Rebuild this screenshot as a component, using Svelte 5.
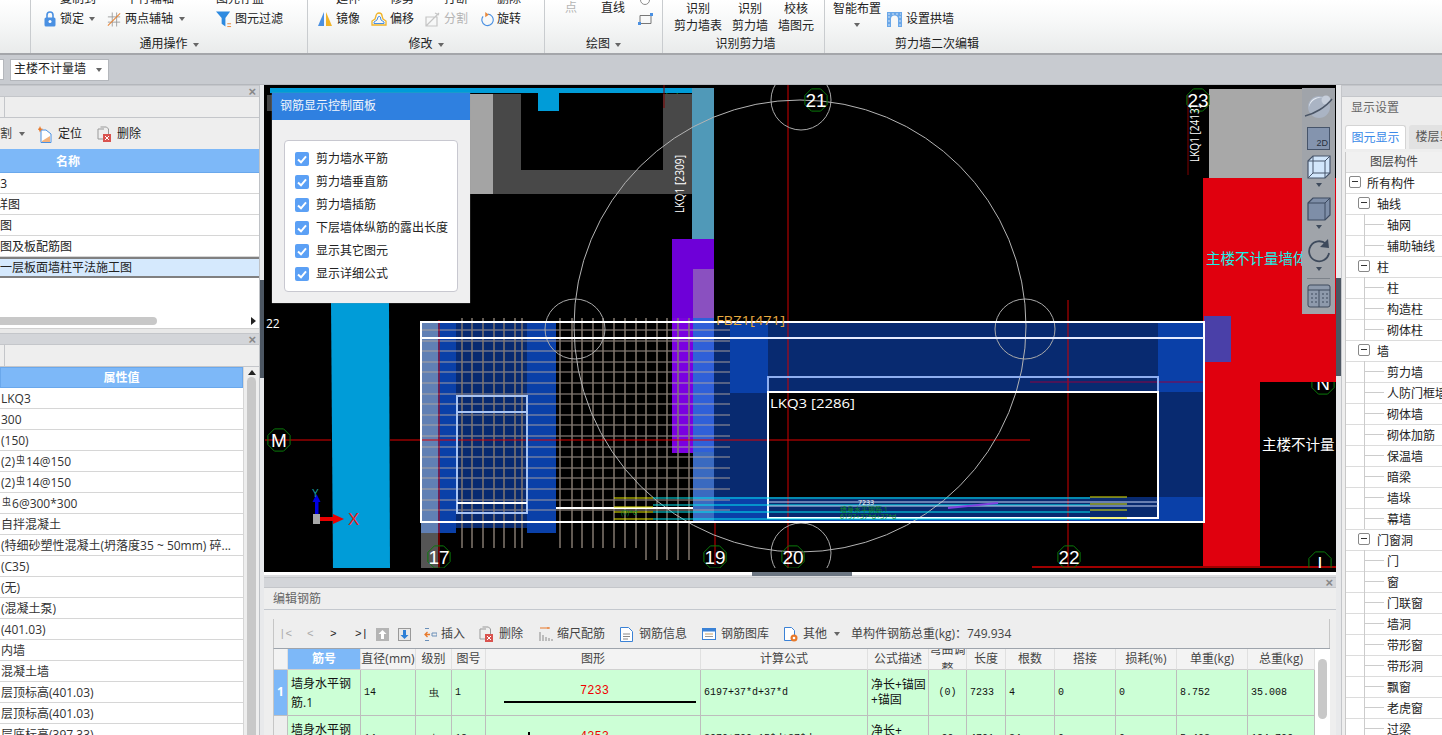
<script>
  const names = [
    { t: 'x3', o: -6 }, { t: '详图', o: -4 }, { t: '图', o: 0 },
    { t: '图及板配筋图', o: 0 }, { t: '一层板面墙柱平法施工图', o: 0, sel: true }
  ];
  const props = ['LKQ3','300','(150)','(2)虫14@150','(2)虫14@150','虫6@300*300','自拌混凝土','(特细砂塑性混凝土(坍落度35 ~ 50mm) 碎...','(C35)','(无)','(混凝土泵)','(401.03)','内墙','混凝土墙','层顶标高(401.03)','层顶标高(401.03)','层底标高(397.33)'];
  const checks = ['剪力墙水平筋','剪力墙垂直筋','剪力墙插筋','下层墙体纵筋的露出长度','显示其它图元','显示详细公式'];
  const tree = [
    ['所有构件',0],['轴线',1],['轴网',2],['辅助轴线',2],['柱',1],['柱',2],['构造柱',2],['砌体柱',2],['墙',1],['剪力墙',2],['人防门框墙',2],['砌体墙',2],['砌体加筋',2],['保温墙',2],['暗梁',2],['墙垛',2],['幕墙',2],['门窗洞',1],['门',2],['窗',2],['门联窗',2],['墙洞',2],['带形窗',2],['带形洞',2],['飘窗',2],['老虎窗',2],['过梁',2]
  ];
  const head = ['','筋号','直径(mm)','级别','图号','图形','计算公式','公式描述','弯曲调整','长度','根数','搭接','损耗(%)','单重(kg)','总重(kg)'];

  const vertsA = [462,472,483,494,504,515,522,560,572,582,593,603,614,625,636];
  const vertsB = [646,657,667,678,689];
  const horiz = [];
  for (let y = 330; y <= 515; y += 10.6) horiz.push(Math.round(y));
  const octa = (cx, cy, r) => {
    const p = [];
    for (let i = 0; i < 8; i++) {
      const a = Math.PI / 8 + (i * Math.PI) / 4;
      p.push(`${(cx + r * Math.cos(a)).toFixed(1)},${(cy + r * Math.sin(a)).toFixed(1)}`);
    }
    return p.join(' ');
  };
  const bubbles = [
    ['17',439,557],['19',715,557],['20',793,557],['22',1069,557],['21',816,100],['23',1198,100],['M',279,440],['I',1320,563]
  ];
</script>

<div class="app">
  <header class="ribbon">
    <section class="rg g1"></section>
    <section class="rg g2">
      <div class="rc">
        <div class="rrow top">
          <span class="tt t1">复制到</span><span class="tt t2">平行辅轴</span><span class="tt t3">图元存盘</span>
        </div>
        <div class="rrow">
          <svg class="ic i-lock" viewBox="0 0 12 16"><path d="M3 7V4a3 3 0 0 1 6 0v3" fill="none" stroke="#4a90e2" stroke-width="1.6"/><rect x="0.5" y="6.5" width="11" height="9" rx="1.5" fill="#4a90e2"/><circle cx="6" cy="10.5" r="1.5" fill="#fff"/></svg>
          <span class="lb">锁定</span><i class="caret c-lock"></i>
          <svg class="ic i-axis" viewBox="0 0 16 16"><path d="M1 5h14M1 11h14M6 0v16M11 0v16" stroke="#999" fill="none"/><path d="M1 15L15 1" stroke="#e8873a" fill="none" stroke-width="1.2"/></svg>
          <span class="lb">两点辅轴</span><i class="caret c-axis"></i>
          <svg class="ic i-filter" viewBox="0 0 17 17"><path d="M0 0h15L10 7v9L6 13V7z" fill="#2d8ae0"/><path d="M12 13h4M12 16h4" stroke="#e8873a" fill="none"/></svg>
          <span class="lb tight">图元过滤</span>
        </div>
      </div>
      <div class="rl"><span>通用操作</span><i class="caret"></i></div>
    </section>
    <section class="rg g3">
      <div class="rc">
        <div class="rrow top">
          <span class="tt m1">延伸</span><span class="tt m2">修剪</span><span class="tt m3">打断</span><span class="tt m4">删除</span>
        </div>
        <div class="rrow">
          <svg class="ic i-mirror" viewBox="0 0 16 16"><path d="M7 1v14H1z" fill="#4a90e2"/><path d="M9 1v14h6z" fill="#f0b429"/></svg>
          <span class="lb tight">镜像</span>
          <svg class="ic i-offset" viewBox="0 0 16 16"><path d="M5 5a3 3 0 0 1 6 0l1 3 3 2v4H1v-4l3-2z" fill="none" stroke="#f0b429" stroke-width="1.3"/><path d="M7 6a1.6 1.6 0 0 1 2.4 0l.6 3 3 2v1.500H3V11l3-2z" fill="none" stroke="#4a90e2"/></svg>
          <span class="lb tight">偏移</span>
          <svg class="ic i-split" viewBox="0 0 16 16"><path d="M1 6h11v9H1zM1 15l13-13M10 2l4 2" fill="none" stroke="#c5c5c5" stroke-width="1.2"/></svg>
          <span class="lb tight off">分割</span>
          <svg class="ic i-rot" viewBox="0 0 16 16"><path d="M9 2.500A6.500 6.500 0 1 1 3.500 5" fill="none" stroke="#4a90e2" stroke-width="1.300"/><path d="M6 0v6l4-3z" fill="#e8873a"/></svg>
          <span class="lb tight">旋转</span>
        </div>
      </div>
      <div class="rl"><span>修改</span><i class="caret"></i></div>
    </section>
    <section class="rg g4">
      <div class="rc col">
        <span class="off">点</span>
        <span>直线</span>
        <div class="shapes">
          <svg class="ic s-a" viewBox="0 0 14 8"><path d="M1 0a6 6 0 0 0 12 0" fill="none" stroke="#8a8a8a" stroke-width="1.300"/></svg>
          <svg class="ic s-b" viewBox="0 0 15 12"><path d="M2 2.500h11v8H2z" fill="none" stroke="#777"/><path d="M0 9h3v3H0zM12 0h3v3h-3z" fill="#4a90e2"/></svg>
        </div>
      </div>
      <div class="rl"><span>绘图</span><i class="caret"></i></div>
    </section>
    <section class="rg g5">
      <div class="rc col">
        <span class="tw">识别<br />剪力墙表</span>
        <span class="tw">识别<br />剪力墙</span>
        <span class="tw">校核<br />墙图元</span>
      </div>
      <div class="rl"><span>识别剪力墙</span></div>
    </section>
    <section class="rg g6">
      <div class="rc col">
        <span class="tw">智能布置<br /><i class="caret sm"></i></span>
        <div class="arch">
          <svg class="ic i-arch" viewBox="0 0 15 16"><path d="M0 1h15v15h-4V8a3.500 3.500 0 0 0-7 0v8H0z" fill="#6aa7e8"/><path d="M1 3h13M2 5v10M13 5v10" stroke="#cfe2f7" stroke-dasharray="2 2" fill="none"/></svg>
          <span>设置拱墙</span>
        </div>
      </div>
      <div class="rl"><span>剪力墙二次编辑</span></div>
    </section>
  </header>

  <div class="subbar">
    <div class="stub"></div>
    <div class="combo"><span>主楼不计量墙</span><i class="caret"></i></div>
  </div>

  <main class="main">
    <aside class="left">
      <div class="pbar"><span class="x">×</span></div>
      <div class="tabline"><b></b></div>
      <div class="ltools">
        <span class="cut">分割</span><i class="caret"></i>
        <svg class="ic ltic" viewBox="0 0 14 17"><path d="M3 4h5l5 4v8.500H3z" fill="#fff" stroke="#4a90e2"/><path d="M4 15l8-5v6H4z" fill="#f3b27c"/><path d="M2 0l1 2.500L5.500 3 3 4 2 6.500 1 4-1.500 3 1 2.500z" fill="#e8792a"/></svg>
        <span>定位</span>
        <svg class="ic ltic d2" viewBox="0 0 14 16"><path d="M3.500 1h6l2 2v5" fill="none" stroke="#999"/><path d="M1 3h6M1 3v10h5" fill="none" stroke="#999"/><rect x="6" y="8" width="8" height="8" fill="#d9534f"/><path d="M8 10l4 4M12 10l-4 4" stroke="#fff"/></svg>
        <span>删除</span>
      </div>
      <div class="thead name"><span>名称</span></div>
      <div class="names">
        {#each names as n}
          <div class="nrow" class:sel={n.sel}><span style="margin-left:{n.o}px">{n.t}</span></div>
        {/each}
        <div class="hscroll"><b></b><i></i></div>
      </div>
      <div class="pgap"></div>
      <div class="pbar"><span class="x">×</span></div>
      <div class="tabline tall"><b></b></div>
      <div class="propwrap">
        <div class="propcol">
          <div class="thead"><span>属性值</span></div>
          {#each props as p}
            <div class="prow">
              {#each p.split('虫') as part, i}{#if i}<sup class="rb">虫</sup>{/if}{part}{/each}
            </div>
          {/each}
        </div>
        <div class="vscroll"><i></i><b></b></div>
      </div>
    </aside>

    <div class="split"><b></b></div>

    <div class="center">
      <div class="canvas">
        <svg class="scene" width="1072" height="487" viewBox="264 85 1072 487">
          <defs><clipPath id="cv"><rect x="264" y="85" width="1072" height="483" /></clipPath></defs>
          <rect x="264" y="85" width="1072" height="487" fill="#000" />
          <g clip-path="url(#cv)">
            <polygon points={octa(672, 100, 9)} fill="none" stroke="#0a7a0a" />
            <polygon points={octa(1323, 383, 12)} fill="none" stroke="#0a7a0a" />
            <text x="1323" y="390" class="bub">N</text>

            <rect x="267" y="95" width="6" height="16" fill="#444" />
            <rect x="270" y="88" width="422" height="5" fill="#009cd8" />
            <rect x="538" y="93" width="21" height="18" fill="#009cd8" />
            <rect x="470" y="94" width="23" height="100" fill="#a4a4a4" />
            <rect x="493" y="94" width="28" height="100" fill="#484848" />
            <rect x="493" y="170" width="199" height="24" fill="#484848" />
            <rect x="663" y="94" width="29" height="100" fill="#484848" />
            <rect x="692" y="88" width="22" height="151" fill="#5099b8" />
            <rect x="672" y="239" width="42" height="84" fill="#6e00d8" />
            <rect x="693" y="269" width="21" height="54" fill="#8a50c0" />
            <path d="M331 303h58l1 267h-57z" fill="#009cd8" />
            <rect x="1209" y="89" width="96" height="90" fill="#a8a8a8" />
            <rect x="1203" y="178" width="57" height="390" fill="#e0000e" />
            <rect x="1260" y="178" width="76" height="204" fill="#e0000e" />

            <rect x="421" y="322" width="17" height="211" fill="#6180b4" />
            <rect x="421" y="533" width="17" height="37" fill="#555" />
            <rect x="438" y="322" width="18" height="211" fill="#0a40a8" />
            <rect x="456" y="322" width="71" height="206" fill="#082a70" />
            <rect x="527" y="322" width="29" height="211" fill="#0a40a8" />
            <rect x="672" y="318" width="21" height="135" fill="#7a00e0" />
            <rect x="693" y="318" width="21" height="204" fill="#3060d8" />
            <rect x="693" y="452" width="21" height="70" fill="#3a6ac0" />
            <rect x="714" y="322" width="490" height="200" fill="#082a70" />
            <rect x="730" y="322" width="38" height="71" fill="#0a40a8" />
            <rect x="714" y="497" width="490" height="25" fill="#0a40a8" />
            <rect x="1158" y="322" width="46" height="70" fill="#0a40a8" />
            <rect x="1204" y="316" width="27" height="46" fill="#4a40a8" />
            <rect x="768" y="392" width="390" height="126" fill="#000" />
            <rect x="768" y="497" width="390" height="21" fill="#082a70" />

            {#each horiz as y}
              <path d="M421 {y}H730" stroke="#b4a89e" stroke-opacity=".6" stroke-width="1.500" />
            {/each}
            {#each vertsA as x}
              <path d="M{x} 318V548" stroke="#83786f" stroke-width="1.500" />
            {/each}
            {#each vertsB as x}
              <path d="M{x} 318V560" stroke="#83786f" stroke-width="1.500" />
            {/each}

            <path d="M265 440H331M390 440H1030" stroke="#e00000" />
            <path d="M1032 567H1336" stroke="#a00000" stroke-width="2" />
            <path d="M788 85V570M1068 300V570M715 523V565M439 320V570" stroke="#d00000" />
            <path d="M1030 382H1204" stroke="#900040" />
            <path d="M664 85V108M1188 95V175" stroke="#800000" />

            <circle cx="800" cy="326" r="226" fill="none" stroke="#b4b4b4" />
            <circle cx="801" cy="100" r="30" fill="none" stroke="#aaa" />
            <circle cx="575" cy="329" r="30" fill="none" stroke="#aaa" />
            <circle cx="1025" cy="329" r="30" fill="none" stroke="#aaa" />
            <circle cx="801" cy="553" r="30" fill="none" stroke="#aaa" />

            <path d="M421 322H1204V522H421Z" fill="none" stroke="#fff" stroke-width="2" />
            <path d="M421 338H730" stroke="#fff" stroke-width="2" />
            <path d="M730 338H1204" stroke="#e6ecff" stroke-width="2" />
            <path d="M556 508H693" stroke="#fff" stroke-width="2" />
            <rect x="457" y="396" width="70" height="117" fill="none" stroke="#a8c4f4" stroke-width="2" />
            <path d="M457 412H527" stroke="#a8c4f4" stroke-width="2" />
            <path d="M457 503H527" stroke="#fff" stroke-width="2" />
            <path d="M768 392V377H1158V392" fill="none" stroke="#8eaef0" stroke-width="2" />
            <rect x="768" y="392" width="390" height="126" fill="none" stroke="#fff" stroke-width="2" />

            <path d="M653 498H1090M653 512H1090M653 519H1090M653 505H1090" stroke="#00e8f0" />
            <path d="M614 498H653M614 507H653M614 512H653M614 519H653M1090 497H1127M1090 504H1127M1090 510H1127M1090 518H1127" stroke="#e8e800" stroke-width="1.200" />
            <path d="M768 502H1158M768 506H1158" stroke="#c8d4f4" />
            <path d="M948 508L998 503" stroke="#8040e0" stroke-width="2" />
            <text x="858" y="505" class="t8 wh">7233</text>
            <text x="840" y="512" class="t8 gr">墙身水平钢筋.1</text>
            <text x="840" y="519" class="t8 gr">6197+37*d+37*d</text>
            <text x="621" y="515" class="t8 gr">(0)*d</text>

            {#each bubbles as b}
              <polygon points={octa(b[1], b[2], 12)} fill="none" stroke="#0a7a0a" />
              <text x={b[1]} y={b[2] + 7} class="bub">{b[0]}</text>
            {/each}
            <text x="266" y="328" class="t12 wh">22</text>
            <text x="770" y="408" class="t12 wh" textLength="85" lengthAdjust="spacingAndGlyphs">LKQ3 [2286]</text>
            <text x="716" y="325" class="t12 org" textLength="69" lengthAdjust="spacingAndGlyphs">FBZ1[471]</text>
            <text transform="translate(684 213) rotate(-90)" class="t12 wh" textLength="58" lengthAdjust="spacingAndGlyphs">LKQ1 [2309]</text>
            <text transform="translate(1199 162) rotate(-90)" class="t12 wh" textLength="57" lengthAdjust="spacingAndGlyphs">LKQ1 [2413]</text>
            <text x="1206" y="264" class="t15 cy">主楼不计量墙体</text>
            <text x="1262" y="450" class="t15 wh">主楼不计量</text>

            <rect x="313" y="514" width="7" height="10" fill="#a8a8a8" />
            <path d="M316.500 494l4 8h-2v12h-3.500v-12h-2.500z" fill="#0000e0" />
            <path d="M320 517h13v-3l11 5-11 5v-3h-13z" fill="#e80000" />
            <text x="348" y="525" class="axt">X</text>
            <text x="312" y="497" class="axy">Y</text>
          </g>
        </svg>

        <div class="cpanel">
          <div class="chead">钢筋显示控制面板</div>
          <div class="cbody">
            <div class="cbox">
              {#each checks as c}
                <div class="ck">
                  <span class="tick"><svg viewBox="0 0 14 14"><path d="M3 7.500l3 2.800 5-6" fill="none" stroke="#fff" stroke-width="2" /></svg></span>
                  <span>{c}</span>
                </div>
              {/each}
            </div>
          </div>
        </div>

        <div class="vtools">
          <svg class="vt orb" viewBox="0 0 30 30">
            <circle cx="15" cy="15" r="11" fill="#aab4c4" /><path d="M5 15a10 10 0 0 1 14-9 12 12 0 0 0-14 9z" fill="#e6ecf4" /><circle cx="22" cy="8" r="4.500" fill="#c6cedb" /><path d="M1 24C10 22 22 15 28 7" stroke="#4a5566" fill="none" stroke-width="1.500" />
          </svg>
          <div class="v2d">2D</div>
          <svg class="vt cube" viewBox="0 0 24 24"><path d="M1 6l5-5h17v17l-5 5H1z" fill="#d2e6fb" stroke="#46546a" stroke-width="1.200" /><path d="M1 6h17v17M18 6l5-5M6 1v17h17M6 18l-5 5" fill="none" stroke="#46546a" /></svg>
          <i class="caret dk"></i>
          <svg class="vt cube" viewBox="0 0 24 24"><path d="M1 6l5-5h17v17l-5 5H1z" fill="#7e8ea8" stroke="#3c4a60" stroke-width="1.200" /><path d="M1 6h17v17M18 6l5-5" fill="none" stroke="#3c4a60" /></svg>
          <i class="caret dk"></i>
          <svg class="vt cube" viewBox="0 0 24 24"><path d="M19 5a10 10 0 1 0 3 9" fill="none" stroke="#3e4a5c" stroke-width="1.800" /><path d="M13 8l9 1-1-9z" fill="#3e4a5c" /></svg>
          <i class="caret dk"></i>
          <div class="vsep"></div>
          <svg class="vt cube" viewBox="0 0 24 24"><rect x="1" y="1" width="22" height="22" rx="2" fill="#8e9aac" stroke="#3e4a5c" /><path d="M1 6h22M12 6v17M4 10h2M8 10h2M15 10h2M19 10h2M4 14h2M8 14h2M15 14h2M19 14h2M4 18h2M8 18h2M15 18h2M19 18h2" stroke="#3e4a5c" fill="none" /></svg>
        </div>
      </div>

      <div class="hsplit"><b></b></div>

      <section class="editor">
        <div class="pbar slim"><span class="x">×</span></div>
        <div class="etitle">编辑钢筋</div>
        <div class="ebody">
          <div class="etools">
            <span class="nav first">|&lt;</span><span class="nav">&lt;</span><span class="nav dk">&gt;</span><span class="nav dk">&gt;|</span>
            <svg class="ic et up" viewBox="0 0 13 13"><rect width="13" height="13" fill="#b4b4b4" /><path d="M6.500 2l4 4h-2.500v5H5V6H2.500z" fill="#fff" /></svg>
            <svg class="ic et dn" viewBox="0 0 13 13"><rect x=".5" y=".5" width="12" height="12" fill="#e8e8e8" stroke="#999" /><path d="M6.500 11l-4-4H5V2h3v5h2.500z" fill="#2d7fd6" /></svg>
            <svg class="ic et i1" viewBox="0 0 13 13"><path d="M1 6.500h5M3.500 4L1 6.500 3.500 9" stroke="#e8792a" fill="none" stroke-width="1.300" /><path d="M8 5h5v3H8zM1 .500h4M1 12.500h4" stroke="#6a8fb8" fill="none" /></svg>
            <span class="lb">插入</span>
            <svg class="ic et i2" viewBox="0 0 14 16"><path d="M3.500 1h6l2 2v5" fill="none" stroke="#999" /><path d="M1 3h6M1 3v10h5" fill="none" stroke="#999" /><rect x="6" y="8" width="8" height="8" fill="#d9534f" /><path d="M8 10l4 4M12 10l-4 4" stroke="#fff" /></svg>
            <span class="lb">删除</span>
            <svg class="ic et i3" viewBox="0 0 14 14"><path d="M1 5v9M4 8v6M7 10v4M10 11v3M13 12v2" stroke="#8a8a8a" fill="none" /><path d="M1 1h10M9 0v2" stroke="#e8792a" fill="none" /></svg>
            <span class="lb">缩尺配筋</span>
            <svg class="ic et i4" viewBox="0 0 13 15"><path d="M.5.500h8l4 4v10H.5z" fill="#fff" stroke="#3b82d6" /><path d="M3 7h7M3 9.500h7M3 12h5" stroke="#888" /></svg>
            <span class="lb">钢筋信息</span>
            <svg class="ic et i5" viewBox="0 0 14 12"><rect x=".5" y=".5" width="13" height="11" fill="#fff" stroke="#3b82d6" /><rect x=".5" y=".5" width="13" height="3" fill="#3b82d6" /><path d="M3 6h8" stroke="#c9a26a" /><path d="M3 8.500h8" stroke="#999" /></svg>
            <span class="lb">钢筋图库</span>
            <svg class="ic et i6" viewBox="0 0 14 15"><path d="M.5.500h7l3 3v10H.5z" fill="#fff" stroke="#3b82d6" /><circle cx="10" cy="11" r="3.500" fill="#e8792a" /><circle cx="10" cy="11" r="1.300" fill="#fff" /></svg>
            <span class="lb">其他</span><i class="caret c-oth"></i>
            <span class="sum">单构件钢筋总重(kg)：749.934</span>
          </div>
          <div class="tablewrap">
            <div class="grid">
              {#each head as h, i}
                <div class="th" class:act={i === 1} class:wrap={i === 8}>{h}</div>
              {/each}

              <div class="rh on">1</div>
              <div class="td name">墙身水平钢<br />筋.1</div>
              <div class="td mono">14</div>
              <div class="td mono ctr">虫</div>
              <div class="td mono">1</div>
              <div class="td shape"><span class="red">7233</span><b></b></div>
              <div class="td mono">6197+37*d+37*d</div>
              <div class="td desc">净长+锚固<br />+锚固</div>
              <div class="td mono ctr">(0)</div>
              <div class="td mono">7233</div>
              <div class="td mono">4</div>
              <div class="td mono">0</div>
              <div class="td mono">0</div>
              <div class="td mono">8.752</div>
              <div class="td mono">35.008</div>

              <div class="rh"></div>
              <div class="td name">墙身水平钢<br />筋.2</div>
              <div class="td mono">14</div>
              <div class="td mono ctr">虫</div>
              <div class="td mono">18</div>
              <div class="td shape two"><u></u><span class="red">4353</span><b></b></div>
              <div class="td mono">3970+700-15*d+37*d</div>
              <div class="td desc">净长+<br />弯折</div>
              <div class="td mono ctr">90</div>
              <div class="td mono">4791</div>
              <div class="td mono">34</div>
              <div class="td mono">0</div>
              <div class="td mono">0</div>
              <div class="td mono">5.403</div>
              <div class="td mono">184.706</div>
            </div>
            <div class="tscroll"><i></i></div>
          </div>
        </div>
      </section>
    </div>

    <div class="split r"><b></b></div>

    <aside class="right">
      <div class="pbar"></div>
      <div class="rtitle">显示设置</div>
      <div class="rtabs">
        <span class="rtab on">图元显示</span>
        <span class="rtab">楼层显示</span>
      </div>
      <div class="tree">
        <div class="thd">图层构件</div>
        {#each tree as t}
          <div class="tn lv{t[1]}">
            {#if t[1] < 2}<span class="tog"></span>{/if}
            <span class="tx">{t[0]}</span>
          </div>
        {/each}
      </div>
    </aside>
  </main>
</div>

<style>
  :global(body) { margin: 0; background: #eee; }
  .app {
    width: 1442px; height: 735px; overflow: hidden; position: relative;
    font: 12px/1.2 "Open Sans", "Noto Sans CJK SC", sans-serif; color: #222;
  }
  .caret {
    display: inline-block; width: 0; height: 0;
    border-left: 3.500px solid transparent; border-right: 3.500px solid transparent; border-top: 4px solid #666;
  }
  .ic { display: block; flex: none; }

  /* ribbon */
  .ribbon {
    height: 53px; display: flex; overflow: hidden;
    background: linear-gradient(#fff, #f6f7f7 45%, #e9ebeb);
    border-bottom: 2px solid #a4a6aa;
  }
  .rg { height: 53px; border-right: 1px solid #c9cccf; display: flex; flex-direction: column; flex: none; box-sizing: border-box; }
  .g1 { width: 31px; }
  .g2 { width: 277px; }
  .g3 { width: 237px; }
  .g4 { width: 118px; }
  .g5 { width: 162px; }
  .g6 { flex: 1; border-right: 0; }
  .rc { height: 34px; flex: none; overflow: hidden; display: flex; flex-direction: column; justify-content: flex-end; position: relative; }
  .rl { height: 21px; flex: none; display: flex; align-items: center; justify-content: center; gap: 5px; }
  .rrow { height: 20px; flex: none; display: flex; align-items: center; margin-bottom: 5px; }
  .rrow.top { margin-bottom: 0; }
  .tt { white-space: nowrap; }
  .t1 { margin-left: 29px; } .t2 { margin-left: 30px; } .t3 { margin-left: 42px; }
  .m1 { margin-left: 28px; } .m2 { margin-left: 30px; } .m3 { margin-left: 30px; } .m4 { margin-left: 29px; }
  .off { color: #b4b4b4; }
  .lb { margin-left: 4px; white-space: nowrap; }
  .lb.tight { margin-left: 3px; }
  .i-lock { width: 12px; height: 16px; margin-left: 13px; }
  .c-lock { margin-left: 5px; }
  .i-axis { width: 14px; height: 15px; margin-left: 12px; }
  .c-axis { margin-left: 6px; }
  .i-filter { width: 16px; height: 17px; margin-left: 31px; }
  .i-mirror { width: 16px; height: 16px; margin-left: 9px; }
  .i-offset { width: 16px; height: 16px; margin-left: 11px; }
  .i-split { width: 16px; height: 16px; margin-left: 11px; }
  .i-rot { width: 14px; height: 16px; margin-left: 12px; }
  .rc.col { flex-direction: row; justify-content: flex-start; }
  .g4 .rc > span { margin-top: -1px; line-height: 17px; }
  .g4 .rc > span:nth-child(1) { margin-left: 20px; }
  .g4 .rc > span:nth-child(2) { margin-left: 24px; }
  .shapes { margin-left: 13px; position: relative; }
  .s-a { width: 14px; height: 6px; }
  .s-b { width: 15px; height: 12px; margin-top: 7px; }
  .tw { text-align: center; line-height: 17px; margin-top: 0; white-space: nowrap; }
  .g5 .tw:nth-child(1) { margin-left: 10px; width: 50px; }
  .g5 .tw:nth-child(2) { margin-left: 8px; width: 38px; }
  .g5 .tw:nth-child(3) { margin-left: 8px; width: 38px; }
  .g5 .rl { padding-left: 4px; box-sizing: border-box; }
  .g6 .tw { margin-left: 7px; width: 50px; }
  .caret.sm { vertical-align: 3px; }
  .arch { display: flex; align-items: center; gap: 4px; margin: 11px 0 0 5px; height: 16px; }
  .i-arch { width: 15px; height: 16px; }
  .g6 .rl { width: 154px; justify-content: flex-end; }

  /* sub toolbar */
  .subbar { height: 29px; background: #c8cbd0; display: flex; align-items: center; gap: 6px; border-bottom: 1px solid #b4b7bc; box-sizing: content-box; }
  .stub { width: 4px; height: 21px; background: #fff; border: 1px solid #b4b7bc; border-left: 0; box-sizing: border-box; }
  .combo { width: 99px; height: 22px; background: #fff; border: 1px solid #b4b7bc; box-sizing: border-box; display: flex; align-items: center; justify-content: space-between; padding: 0 6px 0 3px; }
  .combo span { white-space: nowrap; }

  /* main */
  .main { height: 650px; display: grid; grid-template-columns: 260px 4px 1072px 5px 101px; }
  .left { background: #eee; border-right: 1px solid #bfc2c6; box-sizing: border-box; overflow: hidden; }
  .pbar { height: 12px; background: #d3d5d9; border-top: 1px solid #c4c6ca; border-bottom: 1px solid #c4c6ca; display: flex; justify-content: flex-end; align-items: center; overflow: hidden; box-sizing: border-box; }
  .x { color: #888; font: bold 13px/11px "Liberation Sans", sans-serif; margin-right: 3px; }
  .tabline { height: 21px; border-bottom: 1px solid #c4c6ca; box-sizing: border-box; }
  .tabline.tall { height: 22px; }
  .tabline b { display: block; width: 4px; height: 100%; border-right: 1px solid #c4c6ca; }
  .ltools { height: 31px; display: flex; align-items: center; overflow: hidden; padding-top: 1px; box-sizing: border-box; }
  .cut { margin-left: -12px; white-space: nowrap; color: #444; }
  .ltools .caret { margin-left: 7px; }
  .ltic { width: 14px; height: 17px; margin: 0 6px 0 13px; }
  .ltic.d2 { margin: 0 6px 0 15px; width: 14px; height: 16px; }
  .thead { height: 24px; background: #7db8f8; color: #fff; font-weight: 700; font-size: 12px; display: flex; align-items: center; justify-content: center; border-bottom: 1px solid #6aa8ec; box-sizing: border-box; }
  .thead.name { width: 259px; padding: 4px 123px 0 0; box-sizing: border-box; }
  .names { height: 155px; background: #fff; overflow: hidden; }
  .nrow { height: 21px; border-bottom: 1px solid #d6d6d6; box-sizing: border-box; line-height: 22px; white-space: nowrap; overflow: hidden; }
  .nrow.sel { background: #d5e9fd; border-top: 2px solid #808080; border-bottom: 2px solid #808080; line-height: 18px; height: 21px; }
  .hscroll { margin-top: 39px; height: 8px; position: relative; }
  .hscroll b { display: block; width: 157px; height: 8px; border-radius: 0 4px 4px 0; background: #c8c8c8; }
  .hscroll i { position: absolute; right: 3px; top: 0; border-top: 4px solid transparent; border-bottom: 4px solid transparent; border-left: 5px solid #222; }
  .pgap { height: 5px; background: #e8e8e8; border-top: 1px solid #d0d0d0; box-sizing: border-box; }
  .propwrap { display: flex; background: #fff; }
  .propcol { width: 244px; border-right: 1px solid #d6d6d6; box-sizing: border-box; }
  .propcol .thead { height: 21px; border: 1px solid #6aa8ec; padding-top: 1px; }
  .prow { height: 21px; border-bottom: 1px solid #d6d6d6; box-sizing: border-box; padding-left: 1px; line-height: 22px; white-space: nowrap; overflow: hidden; color: #333; }
  .rb { font-size: 9px; line-height: 0; vertical-align: 3px; margin: 0 1px; }
  .vscroll { flex: 1; background: #eee; position: relative; }
  .vscroll i { position: absolute; left: 4px; top: 3px; border-left: 4px solid transparent; border-right: 4px solid transparent; border-bottom: 5px solid #222; }
  .vscroll b { position: absolute; left: 3px; top: 10px; width: 9px; height: 400px; background: #c8c8c8; border-radius: 5px; }

  .split { background: #e8e9eb; position: relative; }
  .split b { position: absolute; left: 0; right: 0; top: 195px; height: 98px; background: #4c5662; }
  .split.r b { top: 193px; }

  .center { display: flex; flex-direction: column; min-width: 0; overflow: hidden; }
  .canvas { height: 487px; position: relative; flex: none; }
  .scene { display: block; }
  .bub { font: 19px "Liberation Sans", sans-serif; fill: #fff; text-anchor: middle; }
  .t12 { font: 12px "Open Sans", sans-serif; }
  .t8 { font: 7px "Open Sans", "Noto Sans CJK SC", sans-serif; }
  .t15 { font: 14.500px "Noto Sans CJK SC", sans-serif; }
  .wh { fill: #fff; }
  .gr { fill: #0e8a2a; }
  .org { fill: #e8aa40; }
  .cy { fill: #18f0e8; }
  .axt { font: 17px "Liberation Sans", sans-serif; fill: #f02020; }
  .axy { font: 10px "Liberation Sans", sans-serif; fill: #1aa0a0; }

  .cpanel { position: absolute; left: 8px; top: 8px; width: 198px; height: 210px; background: #efeff0; box-shadow: 0 0 1px #999; }
  .chead { height: 27px; background: #2f80e0; color: #f2f6fc; font-size: 12px; line-height: 26px; padding-left: 8px; }
  .cbody { padding: 20px 12px 0 12px; }
  .cbox { height: 152px; background: #fff; border: 1px solid #c8c8d0; border-radius: 4px; box-sizing: border-box; padding: 7px 0 0 10px; }
  .ck { height: 23px; display: flex; align-items: center; gap: 7px; white-space: nowrap; padding-bottom: 1px; box-sizing: border-box; }
  .tick { width: 14px; height: 14px; background: #5ba0f5; border-radius: 2px; display: block; }
  .tick svg { display: block; }

  .vtools { position: absolute; right: 1px; top: 3px; width: 33px; height: 226px; background: #a0a4aa; display: flex; flex-direction: column; align-items: center; box-sizing: border-box; padding-top: 4px; }
  .vt { display: block; flex: none; }
  .orb { width: 30px; height: 30px; }
  .v2d { width: 23px; height: 23px; margin-top: 5px; background: #8494ae; border: 1px solid #46546a; box-sizing: border-box; font: 9px/11px "Liberation Sans", sans-serif; color: #263040; text-align: right; padding: 10px 1px 0 0; }
  .cube { width: 24px; height: 24px; margin-top: 5px; }
  .caret.dk { border-top-color: #3e4a5c; margin-top: 4px; margin-bottom: 5px; }
  .vsep { width: 23px; height: 1px; background: #7c828a; margin-top: 2px; }

  .hsplit { height: 5px; background: linear-gradient(#fff 60%, #dcdde0 60%); position: relative; flex: none; }
  .hsplit b { position: absolute; left: 488px; width: 100px; top: 0; height: 4px; background: #6c7682; }

  .editor { flex: 1; min-height: 0; display: flex; flex-direction: column; background: #eee; overflow: hidden; }
  .pbar.slim { height: 11px; flex: none; }
  .etitle { height: 22px; flex: none; padding-left: 9px; line-height: 21px; color: #666; border-bottom: 1px solid #c4c8ce; box-sizing: border-box; }
  .ebody { flex: 1; padding: 9px 0 0 9px; min-height: 0; }
  .etools { height: 29px; display: flex; align-items: center; border-left: 1px solid #c6c6c6; white-space: nowrap; color: #444; margin-right: 6px; border-right: 1px solid #c6c6c6; padding-top: 1px; box-sizing: border-box; }
  .nav { font: 11px "Liberation Mono", monospace; color: #aaa; }
  .nav.first { margin-left: 5px; width: 28px; }
  .nav:nth-child(2) { width: 23px; }
  .nav.dk { color: #222; width: 25px; }
  .et.up { width: 13px; height: 13px; margin-left: -4px; }
  .et.dn { width: 13px; height: 13px; margin-left: 9px; }
  .et.i1 { width: 13px; height: 13px; margin-left: 13px; }
  .et.i2 { width: 14px; height: 16px; margin: 0 2px 0 14px; }
  .et.i3 { width: 14px; height: 14px; margin-left: 16px; }
  .et.i4 { width: 13px; height: 15px; margin: 0 2px 0 15px; }
  .et.i5 { width: 14px; height: 12px; margin: 0 1px 0 15px; }
  .et.i6 { width: 14px; height: 15px; margin: 0 1px 0 15px; }
  .c-oth { margin-left: 7px; }
  .sum { margin-left: 11px; }
  .tablewrap { display: flex; height: 90px; overflow: hidden; margin-right: 6px; border-top: 1px solid #9ea4ac; border-left: 1px solid #c6c6c6; background: #fff; }
  .grid { display: grid; grid-template-columns: 14px 73px 55px 36px 34px 215px 167px 61px 38px 39px 49px 61px 61px 71px 67px; grid-template-rows: 21px 46px 46px; flex: none; }
  .th { background: #f3f3f3; border-right: 1px solid #e0e0e0; border-bottom: 1px solid #d0d0d0; box-sizing: border-box; display: flex; align-items: center; justify-content: center; color: #444; white-space: nowrap; overflow: hidden; padding-top: 1px; }
  .th.act { background: #7db8f8; color: #fff; font-weight: 700; }
  .th.wrap { white-space: normal; text-align: center; line-height: 19px; padding: 0; }
  .rh { background: #eee; border-right: 1px solid #c0c0c0; border-bottom: 1px solid #c0c0c0; box-sizing: border-box; }
  .rh.on { background: #7db8f8; color: #fff; font-weight: 700; display: flex; align-items: center; justify-content: center; }
  .td { background: #ccffd6; border-right: 1px solid #bdbdbd; border-bottom: 1px solid #bdbdbd; box-sizing: border-box; padding-left: 3px; display: flex; align-items: center; overflow: hidden; white-space: nowrap; color: #111; }
  .td.name { display: block; align-self: stretch; padding-top: 4px; line-height: 19px; }
  .td.desc { display: block; align-self: stretch; padding-top: 7px; line-height: 15px; }
  .td.mono { font: 10px "Liberation Mono", monospace; }
  .td.ctr { justify-content: center; padding-left: 0; }
  .shape { position: relative; justify-content: center; }
  .red { color: #f00000; font: 12px "Liberation Mono", monospace; margin-bottom: 3px; }
  .shape b { position: absolute; left: 18px; right: 4px; top: 31px; height: 2px; background: #000; }
  .shape.two b { display: none; }
  .shape u { position: absolute; left: 42px; top: 16px; width: 2px; height: 30px; background: #000; }
  .tscroll { flex: 1; background: #fff; position: relative; }
  .tscroll i { position: absolute; left: 3px; top: 10px; width: 9px; height: 60px; border-radius: 5px; background: #c8c8c8; }

  .right { background: #eee; overflow: hidden; border-left: 1px solid #c4c6ca; box-sizing: border-box; }
  .rtitle { height: 27px; padding-left: 9px; line-height: 20px; color: #666; box-sizing: border-box; margin-top: 1px; }
  .rtabs { display: flex; height: 25px; padding-left: 3px; gap: 3px; white-space: nowrap; }
  .rtab { width: 61px; height: 24px; background: #e2e2e2; border-radius: 3px 3px 0 0; text-align: center; line-height: 24px; color: #555; flex: none; }
  .rtab.on { background: #fff; color: #3a8ae8; border: 1px solid #d4d4d4; border-bottom: 0; box-sizing: border-box; }
  .tree { margin: 2px 0 0 3px; background: #fff; border-left: 1px solid #c8c8c8; }
  .thd { height: 21px; background: #f1f1f1; border-bottom: 1px solid #d6d6d6; box-sizing: border-box; text-align: center; line-height: 20px; color: #444; white-space: nowrap; }
  .tn { height: 21px; border-bottom: 1px solid #dcdcdc; box-sizing: border-box; position: relative; white-space: nowrap; line-height: 20px; }
  .tn .tx { position: absolute; top: 1px; }
  .lv0 .tx { left: 21px; }
  .lv1 .tx { left: 31px; }
  .lv2 .tx { left: 41px; }
  .tog { position: absolute; top: 3px; width: 12px; height: 12px; border: 1px solid #888; border-radius: 2px; box-sizing: border-box; background: #fff; z-index: 1; }
  .tog::after { content: ""; position: absolute; left: 2px; right: 2px; top: 4px; height: 1px; background: #333; }
  .lv0 .tog { left: 3px; }
  .lv1 .tog { left: 12px; }
  .lv2::before { content: ""; position: absolute; left: 18px; top: -1px; width: 1px; height: 21px; background: #ccc; }
  .lv2::after { content: ""; position: absolute; left: 18px; top: 9px; width: 20px; height: 1px; background: #ccc; }
</style>
